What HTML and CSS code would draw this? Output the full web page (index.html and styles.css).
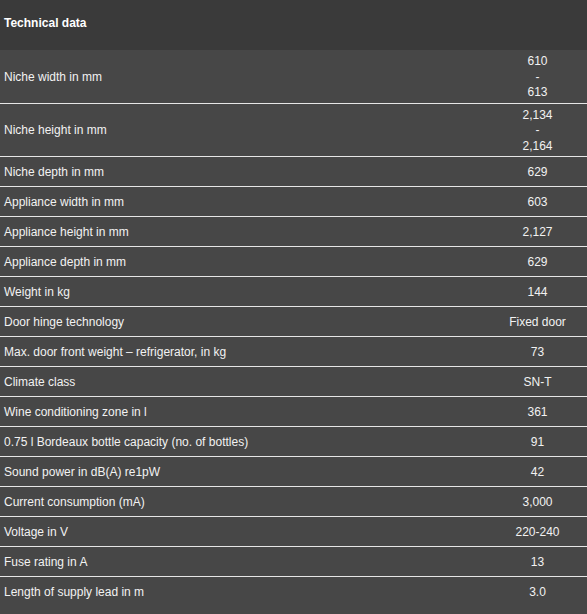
FILE: index.html
```html
<!DOCTYPE html>
<html lang="en">
<head>
<meta charset="utf-8">
<title>Technical data</title>
<link rel="stylesheet" href="styles.css">
</head>
<body>
<table class="spec">
  <colgroup>
    <col class="col-label">
    <col class="col-value">
  </colgroup>
  <thead>
    <tr class="spec-head"><th colspan="2">Technical data</th></tr>
  </thead>
  <tbody>
    <tr><td class="label">Niche width in mm</td><td class="value">610<br>-<br>613</td></tr>
    <tr><td class="label">Niche height in mm</td><td class="value">2,134<br>-<br>2,164</td></tr>
    <tr><td class="label">Niche depth in mm</td><td class="value">629</td></tr>
    <tr><td class="label">Appliance width in mm</td><td class="value">603</td></tr>
    <tr><td class="label">Appliance height in mm</td><td class="value">2,127</td></tr>
    <tr><td class="label">Appliance depth in mm</td><td class="value">629</td></tr>
    <tr><td class="label">Weight in kg</td><td class="value">144</td></tr>
    <tr><td class="label">Door hinge technology</td><td class="value">Fixed door</td></tr>
    <tr><td class="label">Max. door front weight – refrigerator, in kg</td><td class="value">73</td></tr>
    <tr><td class="label">Climate class</td><td class="value">SN-T</td></tr>
    <tr><td class="label">Wine conditioning zone in l</td><td class="value">361</td></tr>
    <tr><td class="label">0.75 l Bordeaux bottle capacity (no. of bottles)</td><td class="value">91</td></tr>
    <tr><td class="label">Sound power in dB(A) re1pW</td><td class="value">42</td></tr>
    <tr><td class="label">Current consumption (mA)</td><td class="value">3,000</td></tr>
    <tr><td class="label">Voltage in V</td><td class="value">220-240</td></tr>
    <tr><td class="label">Fuse rating in A</td><td class="value">13</td></tr>
    <tr class="last"><td class="label">Length of supply lead in m</td><td class="value">3.0</td></tr>
  </tbody>
</table>
</body>
</html>
```
FILE: styles.css
```css
html, body {
  margin: 0;
  padding: 0;
  background: #474747;
}
body {
  font-family: "Liberation Sans", Arial, sans-serif;
  font-size: 12px;
  color: #f2f2f2;
}
.spec {
  width: 587px;
  border-collapse: collapse;
  table-layout: fixed;
}
.col-label {
  width: 488px;
}
.col-value {
  width: 99px;
}
.spec-head th {
  background: #3a3a3a;
  height: 50px;
  box-sizing: border-box;
  padding: 0 4px 4px;
  text-align: left;
  font-weight: bold;
  font-size: 12px;
  color: #ffffff;
  vertical-align: middle;
}
.spec td {
  background: #474747;
  border-bottom: 1px solid #e6e6e6;
  padding: 4px 4px 2px;
  height: 23px;
  line-height: 15.5px;
  vertical-align: middle;
}
.spec tr.last td {
  border-bottom: none;
}
.label {
  text-align: left;
}
.value {
  text-align: center;
}
```
